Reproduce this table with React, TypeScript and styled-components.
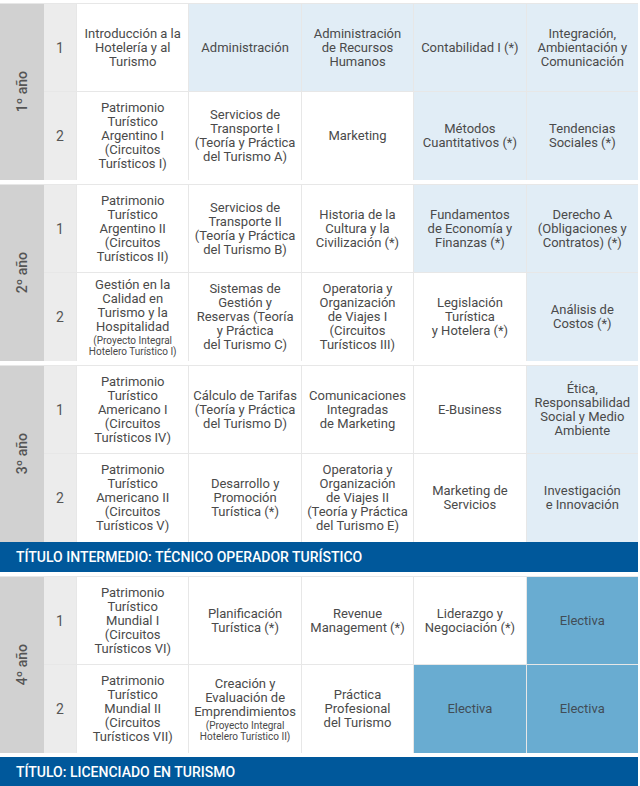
import React from 'react';
import styled, {createGlobalStyle} from 'styled-components';

const GlobalStyle = createGlobalStyle`
  body {
    margin: 0;
    background: #ffffff;
    font-family: Roboto, "Liberation Sans", Arial, sans-serif;
  }
`;

type Tone = 'white' | 'light' | 'elective';

interface Course {
  lines: string[];
  note?: string[];
  tone?: Tone;
}

interface Year {
  label: string;
  rows: Course[][];
  title?: string;
  detached?: boolean;
}

const w = (lines: string[], note?: string[]): Course => ({lines, note, tone: 'white'});
const b = (lines: string[], note?: string[]): Course => ({lines, note, tone: 'light'});
const e = (): Course => ({lines: ['Electiva'], tone: 'elective'});

const years: Year[] = [
  {
    label: '1º año',
    rows: [
      [
        w(['Introducción a la', 'Hotelería y al', 'Turismo']),
        b(['Administración']),
        b(['Administración', 'de Recursos', 'Humanos']),
        b(['Contabilidad I (*)']),
        b(['Integración,', 'Ambientación y', 'Comunicación']),
      ],
      [
        w(['Patrimonio', 'Turístico', 'Argentino I', '(Circuitos', 'Turísticos I)']),
        w(['Servicios de', 'Transporte I', '(Teoría y Práctica', 'del Turismo A)']),
        w(['Marketing']),
        b(['Métodos', 'Cuantitativos (*)']),
        b(['Tendencias', 'Sociales (*)']),
      ],
    ],
  },
  {
    label: '2º año',
    rows: [
      [
        w(['Patrimonio', 'Turístico', 'Argentino II', '(Circuitos', 'Turísticos II)']),
        w(['Servicios de', 'Transporte II', '(Teoría y Práctica', 'del Turismo B)']),
        w(['Historia de la', 'Cultura y la', 'Civilización (*)']),
        b(['Fundamentos', 'de Economía y', 'Finanzas (*)']),
        b(['Derecho A', '(Obligaciones y', 'Contratos) (*)']),
      ],
      [
        w(
          ['Gestión en la', 'Calidad en', 'Turismo y la', 'Hospitalidad'],
          ['(Proyecto Integral', 'Hotelero Turístico I)']
        ),
        w(['Sistemas de', 'Gestión y', 'Reservas (Teoría', 'y Práctica', 'del Turismo C)']),
        w(['Operatoria y', 'Organización', 'de Viajes I', '(Circuitos', 'Turísticos III)']),
        w(['Legislación', 'Turística', 'y Hotelera (*)']),
        b(['Análisis de', 'Costos (*)']),
      ],
    ],
  },
  {
    label: '3º año',
    title: 'Título intermedio: Técnico Operador Turístico',
    rows: [
      [
        w(['Patrimonio', 'Turístico', 'Americano I', '(Circuitos', 'Turísticos IV)']),
        w(['Cálculo de Tarifas', '(Teoría y Práctica', 'del Turismo D)']),
        w(['Comunicaciones', 'Integradas', 'de Marketing']),
        w(['E-Business']),
        b(['Ética,', 'Responsabilidad', 'Social y Medio', 'Ambiente']),
      ],
      [
        w(['Patrimonio', 'Turístico', 'Americano II', '(Circuitos', 'Turísticos V)']),
        w(['Desarrollo y', 'Promoción', 'Turística (*)']),
        w(['Operatoria y', 'Organización', 'de Viajes II', '(Teoría y Práctica', 'del Turismo E)']),
        w(['Marketing de', 'Servicios']),
        b(['Investigación', 'e Innovación']),
      ],
    ],
  },
  {
    label: '4º año',
    title: 'Título: Licenciado en Turismo',
    detached: true,
    rows: [
      [
        w(['Patrimonio', 'Turístico', 'Mundial I', '(Circuitos', 'Turísticos VI)']),
        w(['Planificación', 'Turística (*)']),
        w(['Revenue', 'Management (*)']),
        w(['Liderazgo y', 'Negociación (*)']),
        e(),
      ],
      [
        w(['Patrimonio', 'Turístico', 'Mundial II', '(Circuitos', 'Turísticos VII)']),
        w(
          ['Creación y', 'Evaluación de', 'Emprendimientos'],
          ['(Proyecto Integral', 'Hotelero Turístico II)']
        ),
        w(['Práctica', 'Profesional', 'del Turismo']),
        e(),
        e(),
      ],
    ],
  },
];

const App = () => {
  return (
    <Page>
      <GlobalStyle />
      {years.map((year) => (
        <Section key={year.label}>
          <YearGrid>
            <YearLabel>
              <span>{year.label}</span>
            </YearLabel>
            {year.rows.map((row, r) => (
              <React.Fragment key={r}>
                <Semester style={{gridRow: r + 1}}>{r + 1}</Semester>
                {row.map((course, c) => (
                  <CourseCell key={c} $tone={course.tone || 'white'}>
                    <div>
                      {course.lines.map((line, i) => (
                        <Line key={i}>{line}</Line>
                      ))}
                      {course.note && (
                        <Note>
                          {course.note.map((line, i) => (
                            <Line key={i}>{line}</Line>
                          ))}
                        </Note>
                      )}
                    </div>
                  </CourseCell>
                ))}
              </React.Fragment>
            ))}
          </YearGrid>
          {year.title && <Degree $detached={!!year.detached}>{year.title}</Degree>}
        </Section>
      ))}
    </Page>
  );
};

const Page = styled.div`
  width: 638px;
  padding-top: 3px;
  display: flex;
  flex-direction: column;
  gap: 4px;
`;

const Section = styled.div`
  display: flex;
  flex-direction: column;
`;

const YearGrid = styled.div`
  display: grid;
  grid-template-columns: 43px 32px repeat(5, 1fr);
  grid-template-rows: 87px 88px;
  column-gap: 1px;
  row-gap: 1px;
  padding-top: 1px;
  background-color: #e7e7e7;
`;

const YearLabel = styled.div`
  grid-row: 1 / span 2;
  grid-column: 1;
  margin-right: -1px;
  background-color: #d1d1d1;
  display: flex;
  align-items: center;
  justify-content: center;
  span {
    writing-mode: vertical-rl;
    transform: rotate(180deg);
    font-size: 14px;
    font-weight: 500;
    color: #555555;
  }
`;

const Semester = styled.div`
  grid-column: 2;
  background-color: #ececec;
  display: flex;
  align-items: center;
  justify-content: center;
  font-size: 14px;
  color: #555555;
`;

const toneColors: Record<Tone, string> = {
  white: '#ffffff',
  light: '#e1edf6',
  elective: '#69acd1',
};

const CourseCell = styled.div<{$tone: Tone}>`
  background-color: ${(p) => toneColors[p.$tone]};
  display: flex;
  align-items: center;
  justify-content: center;
  text-align: center;
  font-size: 13px;
  line-height: 14px;
  color: ${(p) => (p.$tone === 'elective' ? '#414d57' : '#4a4a4a')};
  padding: 0 3px;
`;

const Line = styled.div`
  white-space: nowrap;
`;

const Note = styled.div`
  font-size: 10px;
  line-height: 11px;
  margin-top: 1px;
`;

const Degree = styled.div<{$detached: boolean}>`
  height: 30px;
  margin-top: ${(p) => (p.$detached ? '4px' : '0')};
  display: flex;
  align-items: center;
  padding-left: 16px;
  background-color: #00589b;
  color: #ffffff;
  font-size: 14px;
  font-weight: 500;
  text-transform: uppercase;
`;

export default App;
